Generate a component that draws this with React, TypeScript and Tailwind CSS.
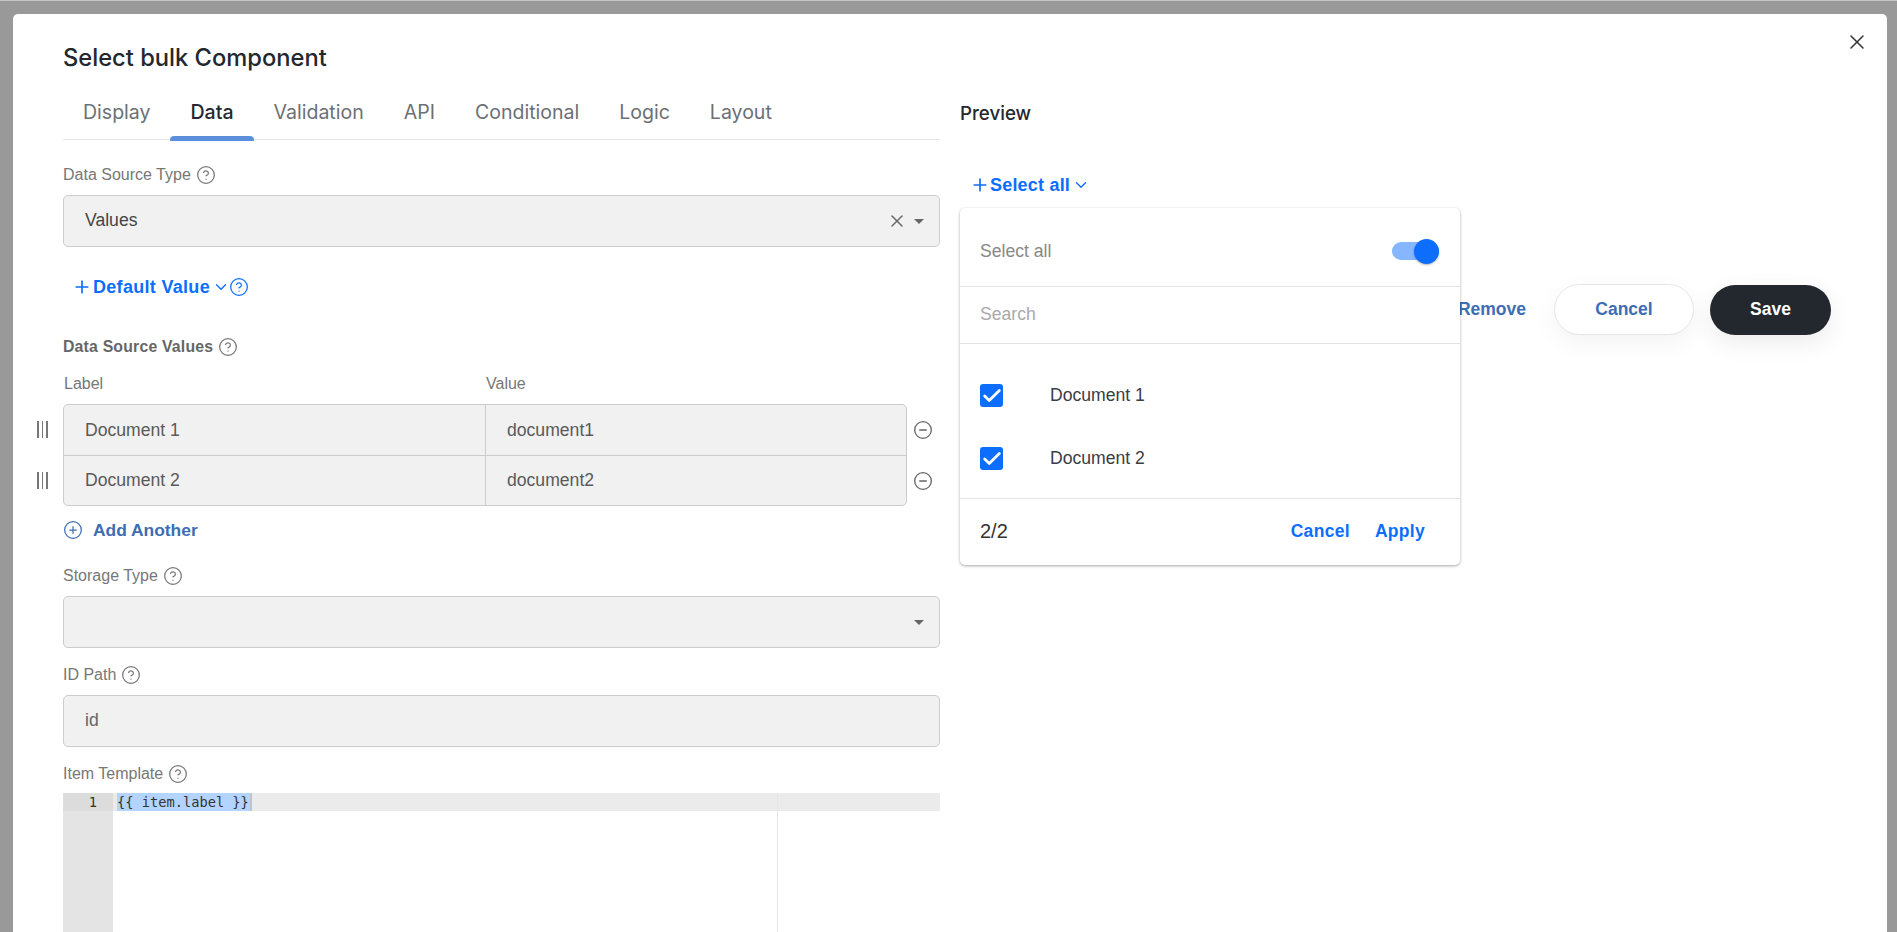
import React from 'react';
import { Check, ChevronDown, CircleHelp, CircleMinus, CirclePlus, Plus, X } from 'lucide-react';

const tabs = ['Display', 'Data', 'Validation', 'API', 'Conditional', 'Logic', 'Layout'];
const rows = [
  { label: 'Document 1', value: 'document1' },
  { label: 'Document 2', value: 'document2' },
];

const Help = ({ className = 'text-[#777]' }: { className?: string }) => (
  <CircleHelp size={20} strokeWidth={1.5} className={className} />
);

const FieldLabel = ({ text, className = '' }: { text: string; className?: string }) => (
  <div className={`flex items-center gap-[5px] h-[20px] text-[16px] text-[#777] ${className}`}>
    {text}
    <Help />
  </div>
);

const Caret = () => (
  <span className="w-0 h-0 border-x-[5px] border-x-transparent border-t-[5px] border-t-[#666]" />
);

const Field = ({ value, textColor = 'text-[#444]', children }: { value?: string; textColor?: string; children?: React.ReactNode }) => (
  <div className={`flex items-center h-[52px] pl-[21px] pr-[15px] bg-[#f1f1f1] border-[1.5px] border-[#ccc] rounded-[5px] text-[17.6px] ${textColor}`}>
    <span className="flex-1 pb-[2px]">{value}</span>
    {children}
  </div>
);

const App = () => {
  return (
    <div className="h-screen overflow-hidden bg-[#999] border-t border-t-[#c4c4c4] pt-[13px] pl-[13px] pr-[10px] font-['Liberation_Sans',sans-serif]">
      <div className="relative h-[1000px] bg-white rounded-[5px] pl-[50px] flex gap-[20px]">
        <button className="absolute top-[16px] right-[18px] text-[#333]">
          <X size={24} strokeWidth={1.5} />
        </button>

        {/* left column */}
        <div className="w-[877px]">
          <h2 className="pt-[30px] h-[64px] text-[23.7px] leading-[28px] font-medium text-[#23282f] font-['Inter',sans-serif]">
            Select bulk Component
          </h2>

          <div className="flex h-[62px] border-b border-[#e6e6e6] font-['Inter',sans-serif] text-[19.55px] text-[#6c7075]">
            {tabs.map((tab) => (
              <div
                key={tab}
                className={`relative flex items-center h-[62px] pt-[8px] px-[20px] ${tab === 'Data' ? 'text-[#23282f] font-medium' : ''}`}
              >
                {tab}
                {tab === 'Data' && (
                  <span className="absolute left-0 right-0 bottom-[-1px] h-[5px] rounded-t-[4px] bg-[#5b8fdc]" />
                )}
              </div>
            ))}
          </div>

          <FieldLabel text="Data Source Type" className="mt-[25px]" />
          <div className="mt-[10px]">
            <Field value="Values">
              <X size={20} strokeWidth={1.8} className="text-[#666] mr-[7px]" />
              <Caret />
            </Field>
          </div>

          <div className="flex items-center h-[24px] mt-[28px] pl-[9px] text-[18px] font-bold tracking-[0.3px] text-[#0d6efd]">
            <Plus size={20} strokeWidth={2} className="mr-[1px]" />
            Default Value
            <ChevronDown size={18} strokeWidth={1.8} className="ml-[2px] mr-[-1px]" />
            <Help className="text-[#0d6efd]" />
          </div>

          <FieldLabel text="Data Source Values" className="mt-[38px] !text-[#666] !text-[15.8px] font-bold tracking-[0.2px]" />

          <div className="relative w-[844px] mt-[15px]">
            <div className="grid grid-cols-[422px_1fr] h-[20px] pl-[1px] text-[16px] text-[#777]">
              <span>Label</span>
              <span>Value</span>
            </div>
            <div className="mt-[12px] border-[1.5px] border-[#ccc] rounded-[5px] bg-[#f1f1f1] text-[17.6px] text-[#5a5a5a]">
              {rows.map((row, i) => (
                <div key={row.value} className={`relative grid grid-cols-[422px_1fr] h-[50px] ${i > 0 ? 'border-t border-[#ccc]' : ''}`}>
                  <div className="flex items-center pl-[21px] border-r border-[#ccc]">{row.label}</div>
                  <div className="flex items-center pl-[21px]">{row.value}</div>
                  <span className="absolute left-[-27px] top-[16px] flex gap-[3px] h-[17px]">
                    <i className="w-[1.5px] bg-[#777]" />
                    <i className="w-[1.5px] bg-[#777]" />
                    <i className="w-[1.5px] bg-[#777]" />
                  </span>
                  <CircleMinus size={20} strokeWidth={1.6} className="absolute right-[-27px] top-[15px] text-[#666]" />
                </div>
              ))}
            </div>
          </div>

          <div className="flex items-center h-[24px] mt-[12px] text-[17.4px] font-bold text-[#3d6db5]">
            <CirclePlus size={20} strokeWidth={1.5} className="mr-[10px]" />
            Add Another
          </div>

          <FieldLabel text="Storage Type" className="mt-[24px]" />
          <div className="mt-[10px]">
            <Field>
              <Caret />
            </Field>
          </div>

          <FieldLabel text="ID Path" className="mt-[17px]" />
          <div className="mt-[10px]">
            <Field value="id" textColor="text-[#666]" />
          </div>

          <FieldLabel text="Item Template" className="mt-[17px]" />
          <div className="relative mt-[9px] h-[300px] flex font-['DejaVu_Sans_Mono',monospace] text-[13.7px] leading-[18px] text-[#333]">
            <div className="w-[50px] h-full bg-[#e4e4e4]">
              <div className="h-[18px] bg-[#dcdcdc] pr-[16px] text-right">1</div>
            </div>
            <div className="flex-1">
              <div className="h-[18px] bg-[#ebebeb] pl-[4px] whitespace-pre">
                <span className="inline-block bg-[#b3d4ff] pr-[1px] border-r-[2px] border-r-[#c4c4c4]">{'{{ item.label }}'}</span>
              </div>
            </div>
            <span className="absolute left-[714px] top-0 bottom-0 w-px bg-[#e6e6e6]" />
          </div>
        </div>

        {/* right column */}
        <div className="relative flex-1">
          <div className="pt-[88px] h-[111px] text-[18.7px] leading-[24px] font-medium text-[#23282f] font-['Inter',sans-serif]">
            Preview
          </div>

          <div className="flex items-center h-[24px] mt-[48px] pl-[10px] text-[18px] font-bold tracking-[0.2px] text-[#0d6efd] w-fit">
            <Plus size={20} strokeWidth={2} />
            Select all
            <ChevronDown size={18} strokeWidth={1.8} className="ml-[2px]" />
          </div>

          <div className="flex justify-end items-center gap-[28px] mt-[87px] pr-[56px] text-[17.5px] font-bold">
            <span className="text-[#3d6db5]">Remove</span>
            <div className="flex items-center gap-[16px]">
              <button className="w-[140px] h-[51px] rounded-full bg-white border border-[#e5e5e5] text-[#3d6db5] shadow-[0_8px_24px_rgba(0,0,0,0.05)]">
                Cancel
              </button>
              <button className="w-[121px] h-[50px] rounded-full bg-[#23282f] text-white shadow-[0_8px_24px_rgba(0,0,0,0.08)]">
                Save
              </button>
            </div>
          </div>

          {/* dropdown panel */}
          <div className="absolute left-0 top-[194px] w-[500px] h-[357px] bg-white rounded-[5px] shadow-[0_1px_3px_rgba(0,0,0,0.35)]">
            <div className="flex items-center justify-between h-[79px] pt-[8px] pl-[20px] pr-[21px] border-b border-[#e3e3e3] text-[17.6px] text-[#888]">
              Select all
              <span className="relative block w-[47px] h-[18px] rounded-full bg-[#86b7fe]">
                <span className="absolute right-0 top-[-3.5px] w-[25px] h-[25px] rounded-full bg-[#0d6efd] shadow-[0_1px_2px_rgba(0,0,0,0.3)]" />
              </span>
            </div>
            <div className="flex items-center h-[57px] pl-[20px] pb-[2px] border-b border-[#e3e3e3] text-[17.6px] text-[#aaa]">
              Search
            </div>
            <div className="flex flex-col gap-[40px] h-[155px] pt-[40px] pl-[20px] border-b border-[#e3e3e3] text-[17.6px] text-[#3a3d42]">
              {rows.map((row) => (
                <div key={row.value} className="flex items-center h-[23px]">
                  <span className="flex items-center justify-center w-[23px] h-[23px] rounded-[3px] bg-[#0d6efd] text-white">
                    <Check size={22} strokeWidth={3} />
                  </span>
                  <span className="ml-[47px] pb-[1px]">{row.label}</span>
                </div>
              ))}
            </div>
            <div className="flex items-center h-[65px] pl-[20px] pr-[35px] pb-[1px]">
              <span className="flex-1 text-[20px] text-[#333]">2/2</span>
              <span className="text-[17.5px] font-bold tracking-[0.3px] text-[#0d6efd]">Cancel</span>
              <span className="ml-[25px] text-[17.5px] font-bold tracking-[0.3px] text-[#0d6efd]">Apply</span>
            </div>
          </div>
        </div>
      </div>
    </div>
  );
};

export default App;
